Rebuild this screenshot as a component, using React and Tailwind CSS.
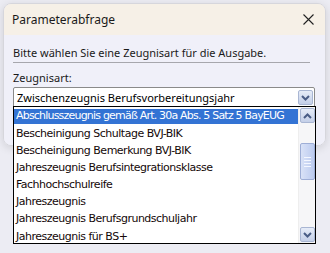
import React from "react";

const items = [
  "Abschlusszeugnis gemäß Art. 30a Abs. 5 Satz 5 BayEUG",
  "Bescheinigung Schultage BVJ-BIK",
  "Bescheinigung Bemerkung BVJ-BIK",
  "Jahreszeugnis Berufsintegrationsklasse",
  "Fachhochschulreife",
  "Jahreszeugnis",
  "Jahreszeugnis Berufsgrundschuljahr",
  "Jahreszeugnis für BS+",
];

function Chevron({ up = false }) {
  return (
    <svg width="9" height="6" viewBox="0 0 9 6" className="block">
      <path
        d={up ? "M1 5 L4.5 1.5 L8 5" : "M1 1 L4.5 4.5 L8 1"}
        fill="none"
        stroke="#4a5d86"
        strokeWidth="2"
      />
    </svg>
  );
}

function ScrollBtn({ up }) {
  return (
    <div className="w-[15px] h-[15px] shrink-0 rounded-[2px] border border-[#a9b6d3] bg-gradient-to-b from-[#e6ecf8] to-[#c4cfe8] flex items-center justify-center">
      <Chevron up={up} />
    </div>
  );
}

export default function App() {
  return (
    <div
      className="w-[330px] h-[253px] bg-[#ececf3] relative overflow-hidden"
      style={{ fontFamily: '"Noto Sans", sans-serif' }}
    >
      <div className="ml-[3px] mt-[3px] w-[323px] rounded-[8px] overflow-hidden border border-[#d6d6dc] shadow-[0_2px_8px_rgba(0,0,0,0.12)]">
        <div className="h-[31px] bg-[#f6f0e7] flex items-center justify-between pl-[8px] pr-[11px]">
          <span className="text-[12px] text-[#1a1a1a] leading-none">Parameterabfrage</span>
          <svg width="11" height="11" viewBox="0 0 11 11">
            <path d="M0.5 0.5 L10.5 10.5 M10.5 0.5 L0.5 10.5" stroke="#222" strokeWidth="1.1" />
          </svg>
        </div>
        <div className="bg-[#f0f0f9] px-[9px] pt-[10px] h-[110px]">
          <div className="text-[11px] leading-[16px] text-[#1a1a1a] pb-[1px] border-b border-[#a7a7ad] mr-[6px]">
            Bitte wählen Sie eine Zeugnisart für die Ausgabe.
          </div>
          <div className="text-[11px] leading-[16px] text-[#1a1a1a] mt-[7px]">Zeugnisart:</div>
          <div className="mt-[1px] h-[21px] w-[302px] bg-white border border-[#8a8a8a] rounded-[2px] flex items-center justify-between pl-[3px] pr-[1px]">
            <span className="text-[11px] text-black leading-none">
              Zwischenzeugnis Berufsvorbereitungsjahr
            </span>
            <ScrollBtn up={false} />
          </div>
        </div>
      </div>

      <div
        className="absolute left-[13px] top-[106px] w-[303px] h-[138px] bg-white border border-black flex"
        style={{ fontFamily: '"DejaVu Sans", sans-serif' }}
      >
        <div className="flex-1 min-w-0 overflow-hidden flex flex-col pt-[1px]">
          {items.map((t, i) => (
            <div key={t} className="h-[17.2px] shrink-0 flex items-center">
              <div
                className={
                  "w-full h-[15px] flex items-center pl-[2px] text-[11px] whitespace-nowrap " +
                  (i === 0
                    ? "bg-[#3373d4] text-white tracking-[-0.8px]"
                    : "text-[#140808] tracking-[-0.5px]")
                }
              >
                {t}
              </div>
            </div>
          ))}
        </div>
        <div className="w-[17px] shrink-0 bg-[#f6f6f8] flex flex-col items-center pt-[1px] pb-[1px] border-l border-[#eeeeee]">
          <ScrollBtn up />
          <div className="mt-[20px] shrink-0 w-[15px] h-[37px] rounded-[2px] border border-[#9eaed6] bg-gradient-to-r from-[#d9e2f7] to-[#bccbef] flex flex-col items-center justify-center gap-[2px]">
            <div className="w-[7px] h-px bg-[#f4f7ff]" />
            <div className="w-[7px] h-px bg-[#f4f7ff]" />
            <div className="w-[7px] h-px bg-[#f4f7ff]" />
            <div className="w-[7px] h-px bg-[#f4f7ff]" />
          </div>
          <div className="flex-1" />
          <ScrollBtn up={false} />
        </div>
      </div>
    </div>
  );
}
